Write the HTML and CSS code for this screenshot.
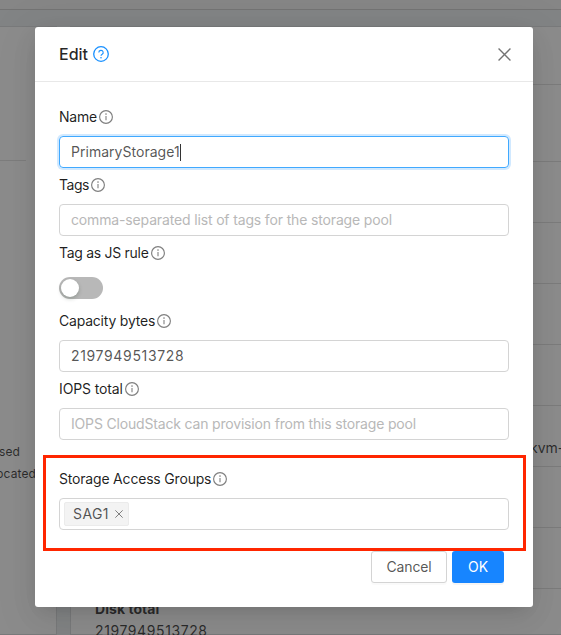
FILE: index.html
```html
<!DOCTYPE html>
<html lang="en">
<head>
<meta charset="utf-8">
<title>Edit primary storage</title>
<link rel="stylesheet" href="styles.css">
</head>
<body>
<svg width="0" height="0" class="defs">
  <symbol id="info" viewBox="0 0 14 14"><circle cx="7" cy="7" r="6.4" fill="none" stroke="currentColor" stroke-width="1.15"/><path d="M7 6v4.2" stroke="currentColor" stroke-width="1.1"/><circle cx="7" cy="4.1" r=".8" fill="currentColor"/></symbol>
  <symbol id="cross" viewBox="0 0 12 12"><path d="M.5 .5l11 11M11.5 .5l-11 11" stroke="currentColor" stroke-width="1.25" fill="none"/></symbol>
</svg>
<div class="page">
  <div class="topbar"></div>
  <div class="columns">
    <aside class="summary">
      <div class="summary-head"></div>
      <div class="legend"><span>Used</span></div>
      <div class="legend"><span>Allocated</span></div>
    </aside>
    <main class="details">
      <div class="row first"></div>
      <div class="row second"></div>
      <div class="row"></div>
      <div class="row"></div>
      <div class="row"></div>
      <div class="row"></div>
      <div class="row host"><span>kvm-</span></div>
      <div class="row"></div>
      <div class="row"></div>
      <div class="disk"><strong>Disk total</strong><span>2197949513728</span></div>
    </main>
  </div>
</div>
<div class="mask">
  <div class="modal" role="dialog">
    <header class="modal-head">
      <h1>Edit</h1>
      <svg class="help" viewBox="0 0 16 16"><circle cx="8" cy="8" r="7.3" fill="none" stroke="currentColor" stroke-width="1.3"/><path d="M5.8 6.5a2.2 2.1 0 1 1 3.1 1.9C8.3 8.7 8 9 8 9.8" fill="none" stroke="currentColor" stroke-width="1.1"/><circle cx="8" cy="11.7" r=".8" fill="currentColor"/></svg>
      <svg class="close"><use href="#cross"/></svg>
    </header>
    <div class="form">
      <div class="item"><label class="l-name">Name<svg><use href="#info"/></svg></label><div class="input focused"><span class="v-name">PrimaryStorage1</span><i class="caret"></i></div></div>
      <div class="item"><label class="l-tags">Tags<svg><use href="#info"/></svg></label><div class="input placeholder"><span class="v-tags">comma-separated list of tags for the storage pool</span></div></div>
      <div class="item"><label class="l-rule">Tag as JS rule<svg><use href="#info"/></svg></label><div class="control"><div class="switch"><i></i></div></div></div>
      <div class="item"><label class="l-cap">Capacity bytes<svg><use href="#info"/></svg></label><div class="input"><span class="v-cap">2197949513728</span></div></div>
      <div class="item"><label class="l-iops">IOPS total<svg><use href="#info"/></svg></label><div class="input placeholder"><span class="v-iops">IOPS CloudStack can provision from this storage pool</span></div></div>
      <div class="item groups"><label class="l-sag">Storage Access Groups<svg><use href="#info"/></svg></label><div class="input select"><span class="tag">SAG1<svg><use href="#cross"/></svg></span></div></div>
      <div class="actions"><button class="btn cancel">Cancel</button><button class="btn ok">OK</button></div>
    </div>
    <div class="highlight"></div>
  </div>
</div>
</body>
</html>
```
FILE: styles.css
```css
* { box-sizing: border-box; }
body { margin: 0; height: 635px; overflow: hidden; position: relative; font: 14px/22px Inter, "Liberation Sans", sans-serif; color: rgba(0,0,0,.68); }
.defs { position: absolute; }
.page { height: 635px; overflow: hidden; background: #edf0f2; }
.topbar { height: 10px; background: #f4f4f4; border-bottom: 1px solid #d2d2d2; }
.columns { display: flex; gap: 13px; padding-top: 16px; height: 625px; }
.summary { flex: none; width: 57px; background: #fff; border: 1px solid #dcdee0; border-left: 0; overflow: hidden; font-size: 12px; }
.summary-head { height: 134px; width: 26px; border-bottom: 1px solid #e4e4e4; margin-bottom: 280px; }
.legend { width: 36px; height: 22px; display: flex; justify-content: flex-end; color: rgba(0,0,0,.7); letter-spacing: .1px; }
.legend:nth-child(2) { width: 20px; }
.details { flex: 1; min-width: 0; background: #fff; border: 1px solid #dcdee0; border-right: 0; }
.row { height: 61px; border-bottom: 1px solid #e2e2e2; margin-left: 24px; }
.first { height: 58px; }
.second { height: 77px; }
.host { padding: 31px 0 0 435px; color: rgba(0,0,0,.7); white-space: nowrap; }
.disk { display: flex; flex-direction: column; padding: 9px 0 0 24px; color: rgba(0,0,0,.7); }
.disk strong { letter-spacing: .05px; }
.disk span { letter-spacing: .6px; }
.mask { position: absolute; inset: 0; background: rgba(0,0,0,.45); padding: 27px 28px 28px 35px; }
.modal { position: relative; height: 580px; background: #fff; border-radius: 3px; box-shadow: 0 6px 16px -8px rgba(0,0,0,.16), 0 9px 28px rgba(0,0,0,.06), 0 12px 48px 16px rgba(0,0,0,.04); }
.modal-head { height: 55px; display: flex; align-items: center; padding: 0 22px 0 24px; border-bottom: 1px solid #e8e8e8; color: rgba(0,0,0,.85); }
h1 { margin: 0 5px 0 0; font-size: 16px; font-weight: 500; line-height: 22px; }
.help { width: 16px; height: 16px; color: #1890ff; }
.close { width: 13px; height: 13px; color: rgba(0,0,0,.55); margin-left: auto; }
.form { padding: 18px 24px 0; }
.item { height: 68px; display: flex; flex-direction: column; }
.groups { margin-top: 22px; }
label { height: 36px; padding-bottom: 2px; display: flex; align-items: center; color: rgba(0,0,0,.88); }
label svg { width: 14px; height: 14px; margin-left: 2px; color: rgba(0,0,0,.5); }
.l-name { letter-spacing: -.2px; }
.l-tags { letter-spacing: -.45px; }
.l-rule { letter-spacing: -.29px; }
.l-cap { letter-spacing: -.21px; }
.l-iops { letter-spacing: -.12px; }
.l-sag { letter-spacing: -.19px; }
.v-name { letter-spacing: .03px; }
.v-tags { letter-spacing: -.15px; }
.v-cap { letter-spacing: .65px; }
.v-iops { letter-spacing: -.175px; }
.input { height: 32px; border: 1px solid #d4d4d4; border-radius: 4px; padding: 0 11px; display: flex; align-items: center; white-space: nowrap; }
.focused { border-color: #40a9ff; box-shadow: 0 0 0 2px rgba(24,144,255,.2); }
.caret { width: 1px; height: 17px; background: #333; }
.placeholder { color: #b8b8b8; }
.control { height: 32px; display: flex; align-items: center; }
.switch { width: 44px; height: 22px; border-radius: 11px; background: #b8b8b8; padding: 2px; }
.switch i { display: block; width: 18px; height: 18px; border-radius: 50%; background: #fff; box-shadow: 0 2px 4px rgba(0,35,11,.2); }
.select { padding: 0 4px; }
.tag { height: 24px; display: flex; align-items: center; padding: 0 5px 0 8px; background: #f3f3f3; border: 1px solid #ebebeb; border-radius: 2px; letter-spacing: .4px; }
.tag svg { width: 8px; height: 8px; margin-left: 6px; color: rgba(0,0,0,.58); }
.actions { display: flex; justify-content: flex-end; gap: 5px; padding: 21px 5px 0 0; }
.btn { height: 32px; padding: 0; border-radius: 3px; font: inherit; }
.cancel { width: 76px; background: #fff; border: 1px solid #d4d4d4; color: rgba(0,0,0,.68); letter-spacing: -.15px; box-shadow: 0 2px 0 rgba(0,0,0,.02); }
.ok { width: 52px; background: #1785ff; border: 0; color: #fff; box-shadow: 0 2px 0 rgba(0,0,0,.04); }
.highlight { position: absolute; left: 8px; top: 428px; width: 483px; height: 96px; border: 3px solid #ff2600; }
```
